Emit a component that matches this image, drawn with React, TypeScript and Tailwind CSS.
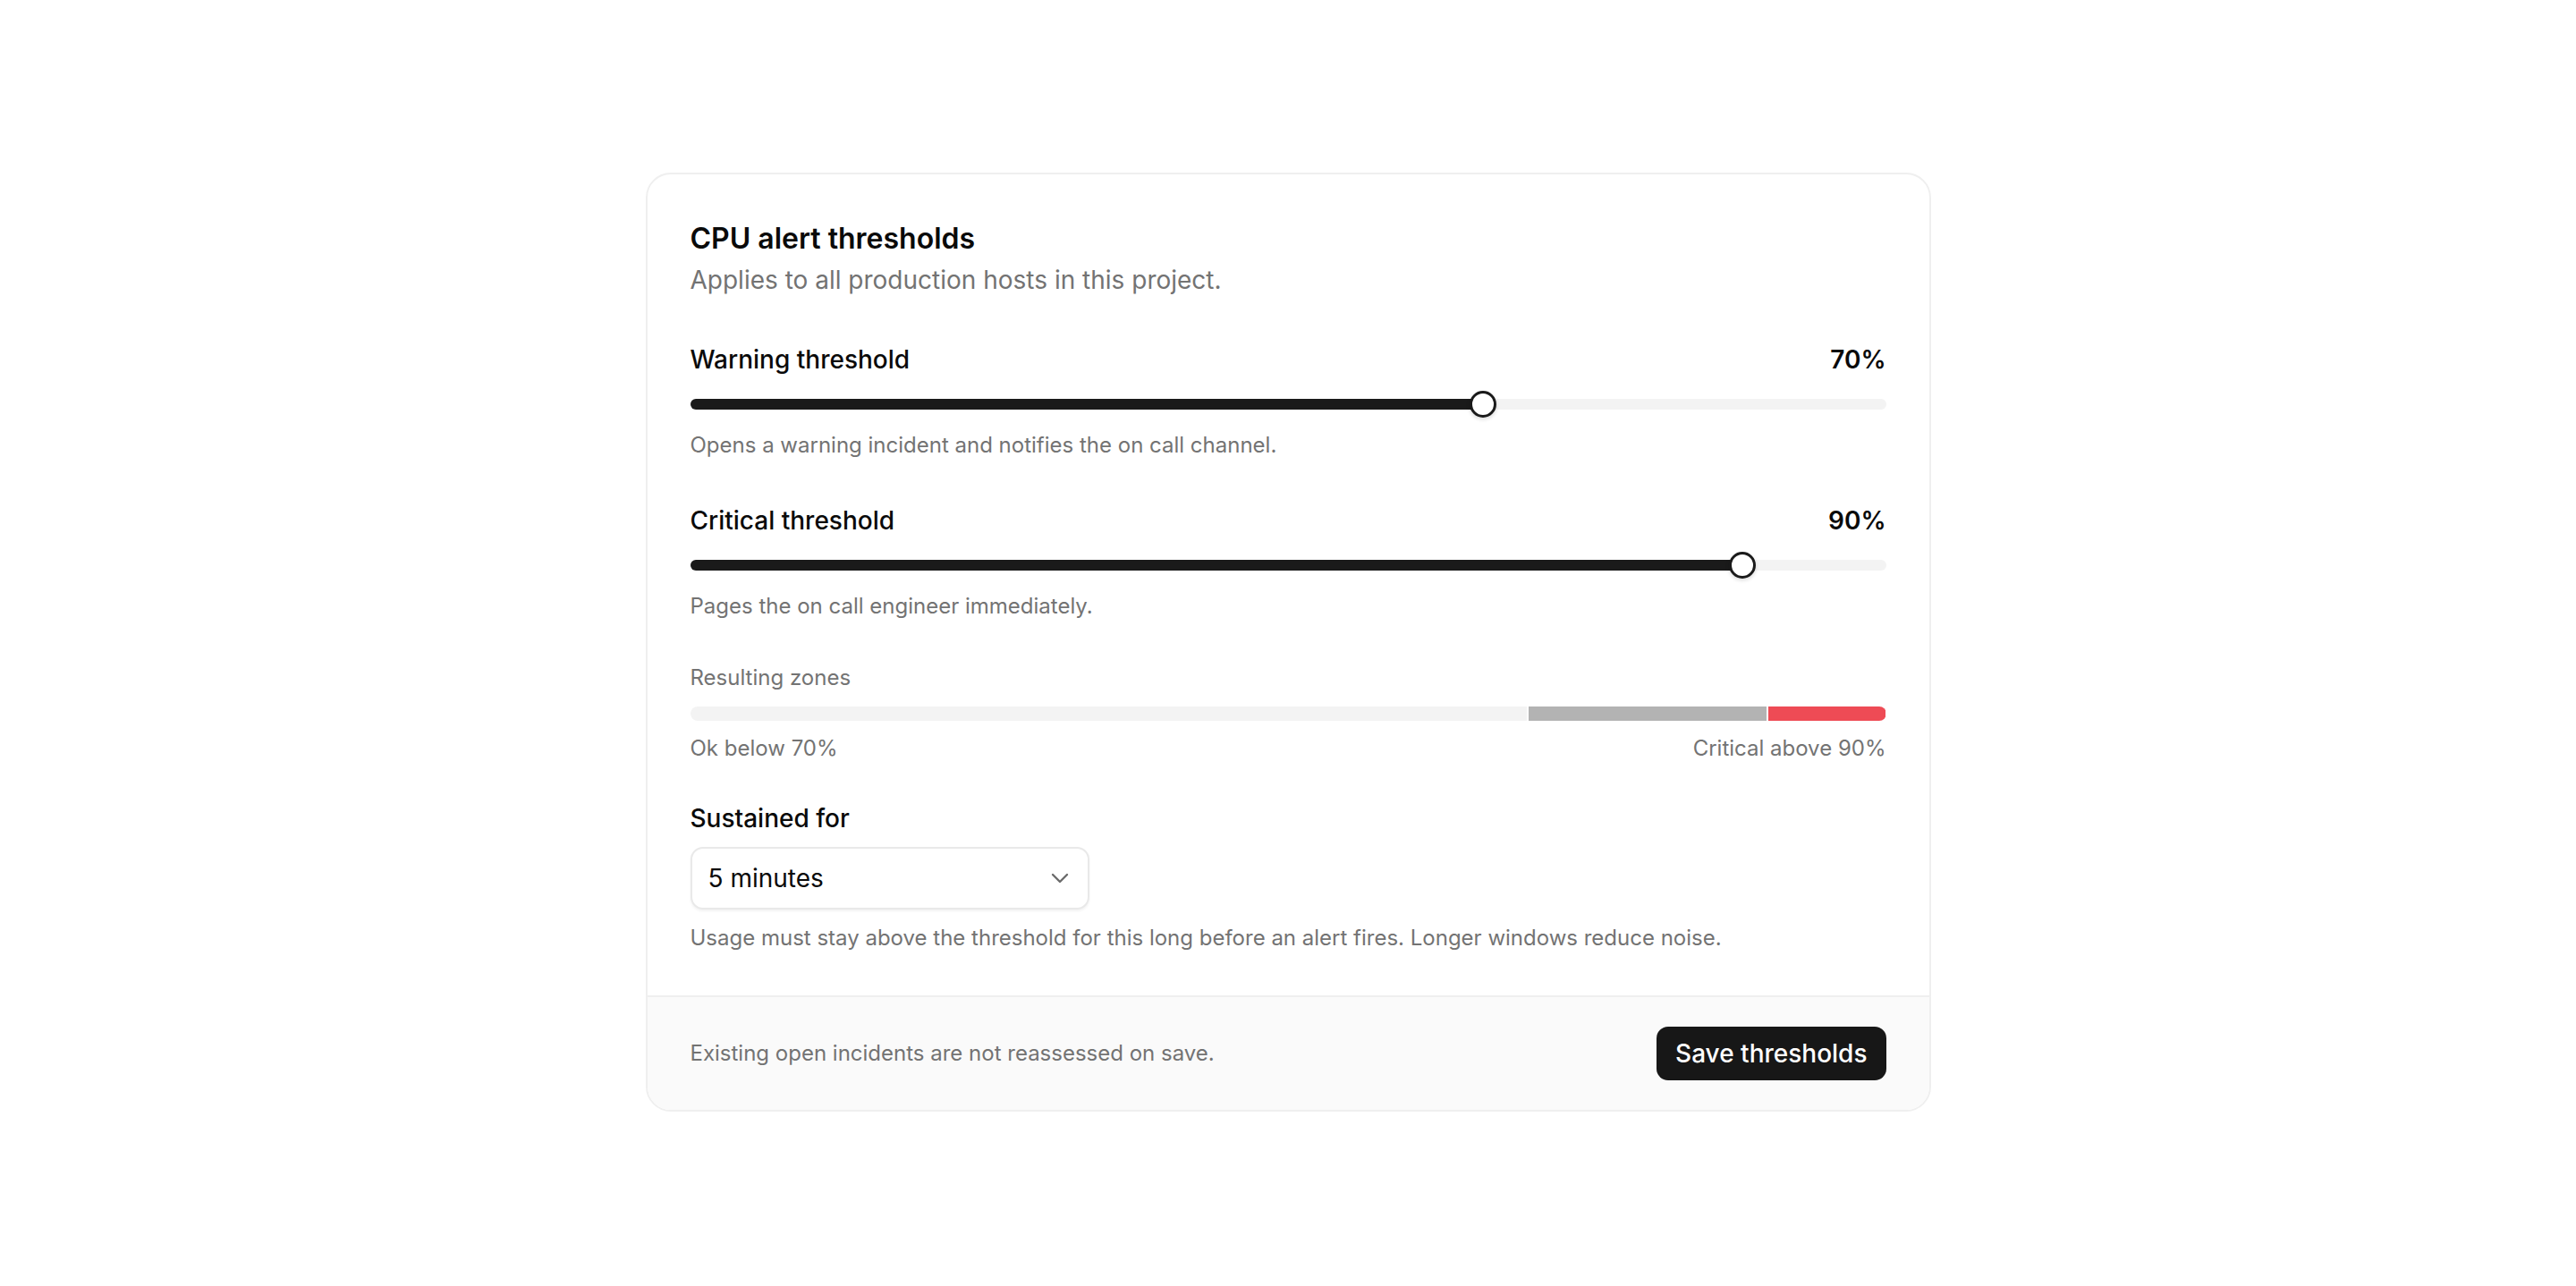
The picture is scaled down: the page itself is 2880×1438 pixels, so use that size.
import { useState } from "react";

const MIN = 10;
const MAX = 100;
const THUMB = 30;

function position(value: number) {
  const frac = (value - MIN) / (MAX - MIN);
  return `calc(${THUMB / 2}px + ${frac} * (100% - ${THUMB}px))`;
}

function ThresholdSlider({
  label,
  value,
  onChange,
  hint,
  className,
}: {
  label: string;
  value: number;
  onChange: (v: number) => void;
  hint: string;
  className?: string;
}) {
  const pos = position(value);
  return (
    <div className={className}>
      <div className="flex items-center justify-between">
        <span className="text-[28px] leading-[36px] font-medium text-[#0a0a0a]">{label}</span>
        <span className="text-[28px] leading-[36px] font-semibold text-[#0a0a0a]">{value}%</span>
      </div>
      <div className="relative mt-[17px] flex h-[30px] items-center">
        <div className="relative h-[12px] w-full overflow-hidden rounded-full bg-[#f3f3f3]">
          <div className="absolute inset-y-0 left-0 bg-[#1a1a1a]" style={{ width: pos }} />
        </div>
        <button
          type="button"
          aria-label={label}
          onClick={() => onChange(value)}
          className="absolute top-1/2 h-[30px] w-[30px] -translate-x-1/2 -translate-y-1/2 rounded-full border-[3px] border-[#1a1a1a] bg-white shadow-[0_2px_4px_rgba(0,0,0,0.15)]"
          style={{ left: pos }}
        />
      </div>
      <p className="mt-[15px] text-[24px] leading-[32px] text-[#737373]">{hint}</p>
    </div>
  );
}

export default function App() {
  const [warning, setWarning] = useState(70);
  const [critical, setCritical] = useState(90);

  return (
    <div className="min-h-screen bg-white pt-[193px] font-['Inter','Noto_Sans',sans-serif] antialiased">
      <div className="mx-auto w-[1437px] overflow-hidden rounded-[28px] border-2 border-[#efefef] bg-white">
        <div className="px-[48px] pt-[53px] pb-[48px]">
          <h1 className="text-[32px] leading-[38px] font-semibold text-[#0a0a0a]">CPU alert thresholds</h1>
          <p className="mt-[9px] text-[28px] leading-[36px] text-[#737373]">
            Applies to all production hosts in this project.
          </p>

          <ThresholdSlider
            className="mt-[53px]"
            label="Warning threshold"
            value={warning}
            onChange={setWarning}
            hint="Opens a warning incident and notifies the on call channel."
          />

          <ThresholdSlider
            className="mt-[50px]"
            label="Critical threshold"
            value={critical}
            onChange={setCritical}
            hint="Pages the on call engineer immediately."
          />

          <div className="mt-[48px]">
            <p className="text-[24px] leading-[32px] text-[#737373]">Resulting zones</p>
            <div className="mt-[16px] flex h-[16px] w-full overflow-hidden rounded-full">
              <div className="bg-[#f3f3f3]" style={{ width: `${warning}%` }} />
              <div className="border-l-2 border-white bg-[#b3b3b3]" style={{ width: `${critical - warning}%` }} />
              <div className="border-l-2 border-white bg-[#ee4b55]" style={{ width: `${100 - critical}%` }} />
            </div>
            <div className="mt-[15px] flex justify-between text-[24px] leading-[32px] text-[#737373]">
              <span>Ok below {warning}%</span>
              <span>Critical above {critical}%</span>
            </div>
          </div>

          <div className="mt-[44px]">
            <p className="text-[28px] leading-[36px] font-medium text-[#0a0a0a]">Sustained for</p>
            <button
              type="button"
              className="mt-[14px] flex h-[70px] w-[446px] items-center justify-between rounded-[14px] border-2 border-[#e9e9e9] bg-white pl-[18px] pr-[21px] shadow-[0_2px_3px_rgba(0,0,0,0.05)]"
            >
              <span className="text-[28px] text-[#0a0a0a]">5 minutes</span>
              <svg width="20" height="12" viewBox="0 0 20 12" fill="none">
                <path d="M2 2l8 8 8-8" stroke="#6b6b6b" strokeWidth="2.4" strokeLinecap="round" strokeLinejoin="round" />
              </svg>
            </button>
            <p className="mt-[16px] text-[24px] leading-[32px] text-[#737373]">
              Usage must stay above the threshold for this long before an alert fires. Longer windows reduce noise.
            </p>
          </div>
        </div>

        <div className="flex h-[128px] items-center justify-between border-t-2 border-[#efefef] bg-[#fafafa] px-[48px]">
          <p className="text-[24px] leading-[32px] text-[#737373]">Existing open incidents are not reassessed on save.</p>
          <button
            type="button"
            className="flex h-[60px] items-center rounded-[13px] bg-[#171717] px-[21px] text-[28px] font-medium text-white"
          >
            Save thresholds
          </button>
        </div>
      </div>
    </div>
  );
}
